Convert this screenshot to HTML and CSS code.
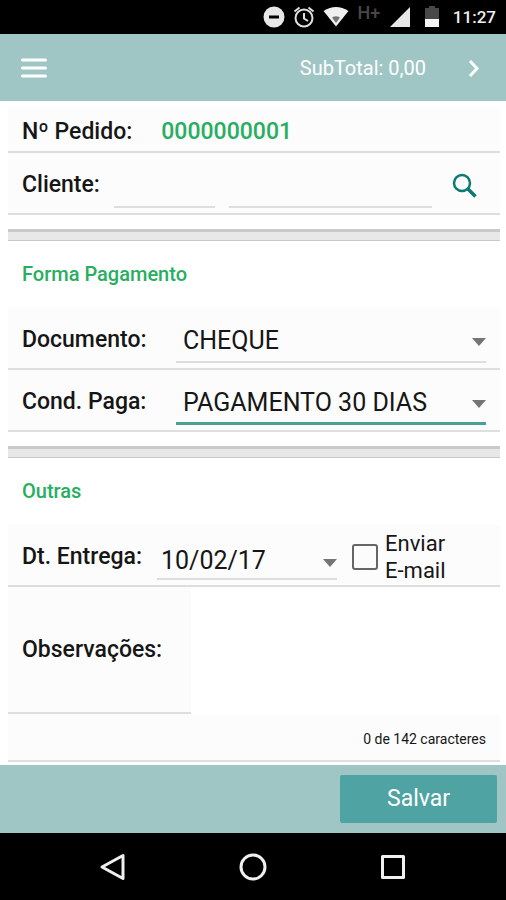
FILE: index.html
```html
<!DOCTYPE html>
<html lang="pt-BR">
<head>
    <meta charset="UTF-8">
    <meta name="viewport" content="width=device-width, initial-scale=1.0">
    <title>Pedido</title>
    <link rel="stylesheet" href="styles.css">
</head>
<body>
    <div class="status-bar">
        <svg width="22" height="22" viewBox="0 0 22 22">
            <circle cx="11" cy="11" r="10.5" fill="#e8e8e8"/>
            <rect x="6" y="9.5" width="10" height="3" fill="#000"/>
        </svg>
        <svg width="22" height="22" viewBox="0 0 22 22" fill="none" stroke="#e0e0e0" stroke-width="2">
            <circle cx="11" cy="12" r="8.5"/>
            <path d="M11 7v5.500l4 2.500M1.500 5.500l5-4M20.500 5.500l-5-4"/>
        </svg>
        <svg width="26" height="22" viewBox="0 0 26 22">
            <path d="M13 20.500L.5 5Q13-3 25.500 5z" fill="#f0f0f0"/>
            <path d="M13 17l-4-5.500q4-2.500 8 0z" fill="#777"/>
        </svg>
        <span class="network">H+</span>
        <svg width="22" height="22" viewBox="0 0 22 22">
            <path d="M21 1v20H1z" fill="#e8e8e8"/>
        </svg>
        <svg class="battery" width="14" height="22" viewBox="0 0 14 22">
            <path d="M4 0h6v2h4v11H0V2h4z" fill="#484848"/>
            <path d="M0 13h14v8H0z" fill="#f5f5f5"/>
        </svg>
        <span class="clock">11:27</span>
    </div>

    <header class="toolbar">
        <button class="icon-btn" type="button" aria-label="Menu">
            <svg width="28" height="24" viewBox="0 0 28 24" fill="none" stroke="#fff" stroke-width="3" stroke-linecap="round">
                <path d="M2.500 4h23M2.500 12h23M2.500 20h23"/>
            </svg>
        </button>
        <span class="subtotal">SubTotal: 0,00</span>
        <button class="icon-btn" type="button" aria-label="Avançar">
            <svg width="24" height="24" viewBox="0 0 24 24" fill="none" stroke="#fff" stroke-width="3">
                <path d="M8 5l7 7.500-7 7.500"/>
            </svg>
        </button>
    </header>

    <main>
        <form id="pedido">
            <div class="row row-pedido">
                <span class="label">Nº Pedido:</span>
                <output class="numero">0000000001</output>
            </div>
            <div class="row row-cliente">
                <label class="label" for="codCliente">Cliente:</label>
                <input class="codigo" id="codCliente" type="text">
                <input class="nome" type="text" aria-label="Nome do cliente">
                <button class="icon-btn" type="button" aria-label="Pesquisar">
                    <svg width="28" height="28" viewBox="0 0 28 28" fill="none" stroke="#0b7a70">
                        <circle cx="10" cy="12" r="8" stroke-width="2.500"/>
                        <path d="M16 18l7.500 7.500" stroke-width="3.500"/>
                    </svg>
                </button>
            </div>

            <hr>

            <h2>Forma Pagamento</h2>
            <div class="row">
                <label class="label label-fixed" for="documento">Documento:</label>
                <select id="documento">
                    <option>CHEQUE</option>
                </select>
            </div>
            <div class="row">
                <label class="label label-fixed" for="condPaga">Cond. Paga:</label>
                <select class="active" id="condPaga">
                    <option>PAGAMENTO 30 DIAS</option>
                </select>
            </div>

            <hr>

            <h2>Outras</h2>
            <div class="row row-entrega">
                <label class="label" for="dtEntrega">Dt. Entrega:</label>
                <select class="data" id="dtEntrega">
                    <option>10/02/17</option>
                </select>
                <label class="check">
                    <input type="checkbox">
                    <span>Enviar<br>E-mail</span>
                </label>
            </div>
            <div class="obs">
                <label class="label" for="obs">Observações:</label>
                <textarea id="obs" maxlength="142"></textarea>
            </div>
            <div class="row row-contador">0 de 142 caracteres</div>
        </form>
    </main>

    <footer class="actions">
        <button class="btn-salvar" type="submit" form="pedido">Salvar</button>
    </footer>

    <nav class="nav-bar">
        <button class="icon-btn" type="button" aria-label="Voltar">
            <svg width="28" height="28" viewBox="0 0 28 28" fill="none" stroke="#f0f0f0" stroke-width="3" stroke-linejoin="round">
                <path d="M24 2.500v23L3 14z"/>
            </svg>
        </button>
        <button class="icon-btn" type="button" aria-label="Início">
            <svg width="28" height="28" viewBox="0 0 28 28" fill="none" stroke="#f0f0f0" stroke-width="3">
                <circle cx="14" cy="14" r="12"/>
            </svg>
        </button>
        <button class="icon-btn" type="button" aria-label="Recentes">
            <svg width="28" height="28" viewBox="0 0 28 28" fill="none" stroke="#f0f0f0" stroke-width="3" stroke-linejoin="round">
                <rect x="3.500" y="3.500" width="21" height="21"/>
            </svg>
        </button>
    </nav>
</body>
</html>
```

FILE: styles.css
```css
:root {
    --bar-color: #9fc6c5;
    --primary-color: #4fa3a2;
    --active-color: #4aa091;
    --green: #27ae60;
    --line: #dedede;
    --row-bg: #fcfcfc;
    --text: #161616;
}

* {
    margin: 0;
    padding: 0;
    box-sizing: border-box;
    font-family: Roboto, "Noto Sans", sans-serif;
}

body {
    display: flex;
    flex-direction: column;
    min-height: 100vh;
    background-color: #fff;
    color: var(--text);
}

svg {
    display: block;
}

.icon-btn {
    background: none;
    border: none;
    cursor: pointer;
}

/* Barra de status */
.status-bar {
    display: flex;
    justify-content: flex-end;
    align-items: center;
    gap: 8px;
    height: 34px;
    padding: 0 10px;
    background-color: #000;
    color: #f0f0f0;
}

.network {
    width: 24px;
    padding-bottom: 8px;
    color: #484848;
    font-size: 18px;
    font-weight: 500;
    line-height: 18px;
    text-align: center;
}

.battery {
    margin: 0 6px;
}

.clock {
    font-size: 17px;
    font-weight: 500;
}

/* Cabeçalho */
.toolbar {
    display: flex;
    align-items: center;
    height: 67px;
    padding: 0 20px;
    background-color: var(--bar-color);
}

.subtotal {
    margin-left: auto;
    margin-right: 36px;
    color: #fff;
    font-size: 20px;
}

/* Formulário */
main {
    flex: 1;
    padding: 7px 6px 3px 8px;
}

.row {
    display: flex;
    align-items: center;
    height: 62px;
    padding: 3px 14px 0;
    background-color: var(--row-bg);
    border-bottom: 2px solid var(--line);
}

.row-pedido {
    height: 45px;
    gap: 29px;
}

.label {
    font-size: 23px;
    font-weight: 500;
    white-space: nowrap;
}

.label-fixed {
    width: 154px;
}

.numero {
    color: var(--green);
    font-size: 23px;
    font-weight: 500;
}

.row-cliente {
    gap: 14px;
}

input[type="text"] {
    min-width: 0;
    height: 46px;
    background: none;
    border: none;
    border-bottom: 2px solid var(--line);
    outline: none;
    font-size: 24px;
}

.codigo {
    flex: 1;
}

.nome {
    flex: 2;
}

.row-cliente .icon-btn {
    padding: 0 6px;
}

hr {
    height: 12px;
    margin: 14px 0 0;
    background-color: #e8e8e8;
    border: solid #c9c9c9;
    border-width: 3px 0 1px;
}

h2 {
    padding: 0 14px;
    color: var(--green);
    font-size: 20px;
    font-weight: 500;
    line-height: 67px;
}

select {
    flex: 1;
    min-width: 0;
    height: 46px;
    padding: 4px 7px 0;
    background: url("data:image/svg+xml,%3Csvg xmlns='http://www.w3.org/2000/svg' width='14' height='8'%3E%3Cpath d='M0 0h14L7 8z' fill='%23757575'/%3E%3C/svg%3E") no-repeat right 0 top 21px;
    border: none;
    border-bottom: 2px solid var(--line);
    border-radius: 0;
    outline: none;
    appearance: none;
    color: var(--text);
    font-size: 25px;
}

select.active {
    border-bottom: 3px solid var(--active-color);
}

.row-entrega {
    gap: 15px;
}

select.data {
    padding: 10px 4px 0;
    background-position: right 0 top 25px;
}

.check {
    display: flex;
    align-items: center;
    gap: 7px;
    width: 134px;
    font-size: 22px;
    line-height: 27px;
}

.check input {
    appearance: none;
    width: 26px;
    height: 26px;
    border: 2px solid #666;
    border-radius: 3px;
}

.check input:checked {
    background-color: var(--active-color);
}

.obs {
    display: flex;
    height: 127px;
}

.obs .label {
    display: flex;
    align-items: center;
    width: 183px;
    padding: 0 14px;
    background-color: var(--row-bg);
    border-bottom: 2px solid var(--line);
}

.obs textarea {
    flex: 1;
    min-width: 0;
    padding: 8px;
    border: none;
    outline: none;
    resize: none;
    font-size: 22px;
}

.row-contador {
    justify-content: flex-end;
    height: 48px;
    font-size: 14px;
}

/* Rodapé */
.actions {
    display: flex;
    justify-content: flex-end;
    align-items: center;
    height: 68px;
    padding: 0 9px;
    background-color: var(--bar-color);
}

.btn-salvar {
    width: 157px;
    height: 48px;
    padding-bottom: 2px;
    background-color: var(--primary-color);
    border: none;
    border-radius: 2px;
    color: #fff;
    cursor: pointer;
    font-size: 23px;
}

.nav-bar {
    display: flex;
    justify-content: center;
    align-items: center;
    gap: 112px;
    height: 67px;
    background-color: #000;
}
```
